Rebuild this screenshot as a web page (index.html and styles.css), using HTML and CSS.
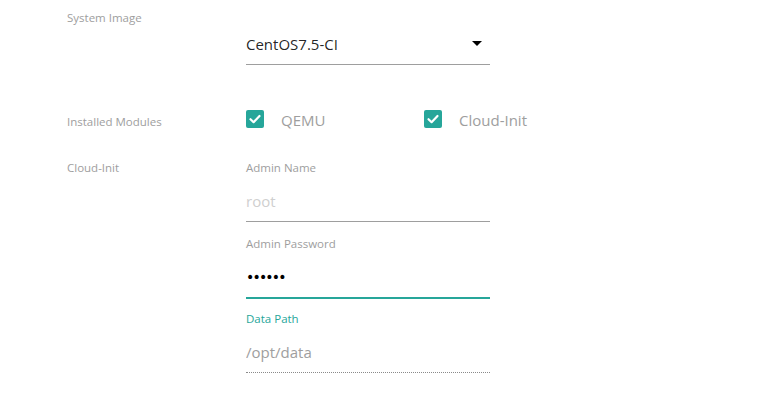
FILE: index.html
```html
<!DOCTYPE html>
<html>
<head>
<meta charset="utf-8">
<link rel="stylesheet" href="styles.css">
</head>
<body>
<div class="form">
  <div class="row row-image">
    <div class="label">System Image</div>
    <div class="field">
      <div class="select">
        <span class="select-value">CentOS7.5-CI</span>
        <svg class="caret" width="10" height="5" viewBox="0 0 10 5"><path d="M0 0H10L5 5Z" fill="#000"/></svg>
      </div>
    </div>
  </div>
  <div class="row row-modules">
    <div class="label">Installed Modules</div>
    <div class="field checks">
      <label class="check">
        <span class="box"><svg width="18" height="18" viewBox="0 0 18 18"><path d="M4.5 9.2L7.6 12.2L13.5 6" fill="none" stroke="#fff" stroke-width="2.2" stroke-linecap="round" stroke-linejoin="round"/></svg></span>
        <span class="check-text">QEMU</span>
      </label>
      <label class="check">
        <span class="box"><svg width="18" height="18" viewBox="0 0 18 18"><path d="M4.5 9.2L7.6 12.2L13.5 6" fill="none" stroke="#fff" stroke-width="2.2" stroke-linecap="round" stroke-linejoin="round"/></svg></span>
        <span class="check-text">Cloud-Init</span>
      </label>
    </div>
  </div>
  <div class="row row-cloud">
    <div class="label">Cloud-Init</div>
    <div class="field">
      <div class="input-group">
        <div class="sub-label">Admin Name</div>
        <input class="text-input" type="text" placeholder="root">
      </div>
      <div class="input-group">
        <div class="sub-label">Admin Password</div>
        <div class="text-input focused password">••••••</div>
      </div>
      <div class="input-group">
        <div class="sub-label active">Data Path</div>
        <input class="text-input disabled" type="text" value="/opt/data" disabled>
      </div>
    </div>
  </div>
</div>
</body>
</html>
```

FILE: styles.css
```css
* { box-sizing: border-box; }
html, body { margin: 0; padding: 0; background: #fff; }
body {
  font-family: "Open Sans", "Noto Sans", sans-serif;
  width: 773px;
  height: 405px;
  overflow: hidden;
}
.form { padding-left: 67px; }
.row { display: flex; }
.label {
  width: 179px;
  flex: none;
  font-size: 11.5px;
  line-height: 20px;
  color: #9e9e9e;
}
.field { width: 244px; }

.row-image .label { padding-top: 8px; }
.select {
  margin-top: 32px;
  height: 33px;
  padding-bottom: 8px;
  border-bottom: 1px solid #9e9e9e;
  display: flex;
  align-items: center;
  justify-content: space-between;
  padding-right: 8px;
}
.select-value {
  font-size: 15px;
  line-height: 24px;
  color: rgba(0,0,0,0.87);
}
.caret { display: block; margin-top: -2px; }

.row-modules { margin-top: 45px; }
.row-modules .label { padding-top: 2px; }
.checks { display: flex; align-items: center; height: 20px; }
.check { display: flex; align-items: center; width: 178px; flex: none; }
.box {
  width: 18px;
  height: 18px;
  border-radius: 2px;
  background: #26a69a;
  display: block;
  margin-top: -3px;
}
.box svg { display: block; }
.check-text {
  margin-left: 17px;
  font-size: 15px;
  line-height: 20px;
  color: #9e9e9e;
}

.row-cloud { margin-top: 26px; }
.sub-label {
  font-size: 11.5px;
  line-height: 20px;
  color: #9e9e9e;
}
.sub-label.active { color: #26a69a; }
.input-group { margin-bottom: 12px; }
.text-input {
  display: block;
  width: 244px;
  margin: 11px 0 0;
  padding: 0 0 8px;
  height: 33px;
  border: none;
  border-bottom: 1px solid #9e9e9e;
  outline: none;
  background: transparent;
  font-family: "Open Sans", "Noto Sans", sans-serif;
  font-size: 15px;
  line-height: 24px;
  color: rgba(0,0,0,0.87);
}
.text-input::placeholder { color: #cfcfcf; }
.text-input.focused {
  margin-top: 11px;
  border-bottom: 1px solid #26a69a;
  box-shadow: 0 1px 0 0 #26a69a;
}
.password {
  font-family: "DejaVu Sans", sans-serif;
  font-size: 14px;
  letter-spacing: -1.8px;
  color: #000;
}
.input-group:nth-child(2) { margin-bottom: 11px; }
.text-input.disabled {
  color: #9e9e9e;
  border-bottom: 1px dotted #8a8a8a;
  -webkit-text-fill-color: #9e9e9e;
}
```
